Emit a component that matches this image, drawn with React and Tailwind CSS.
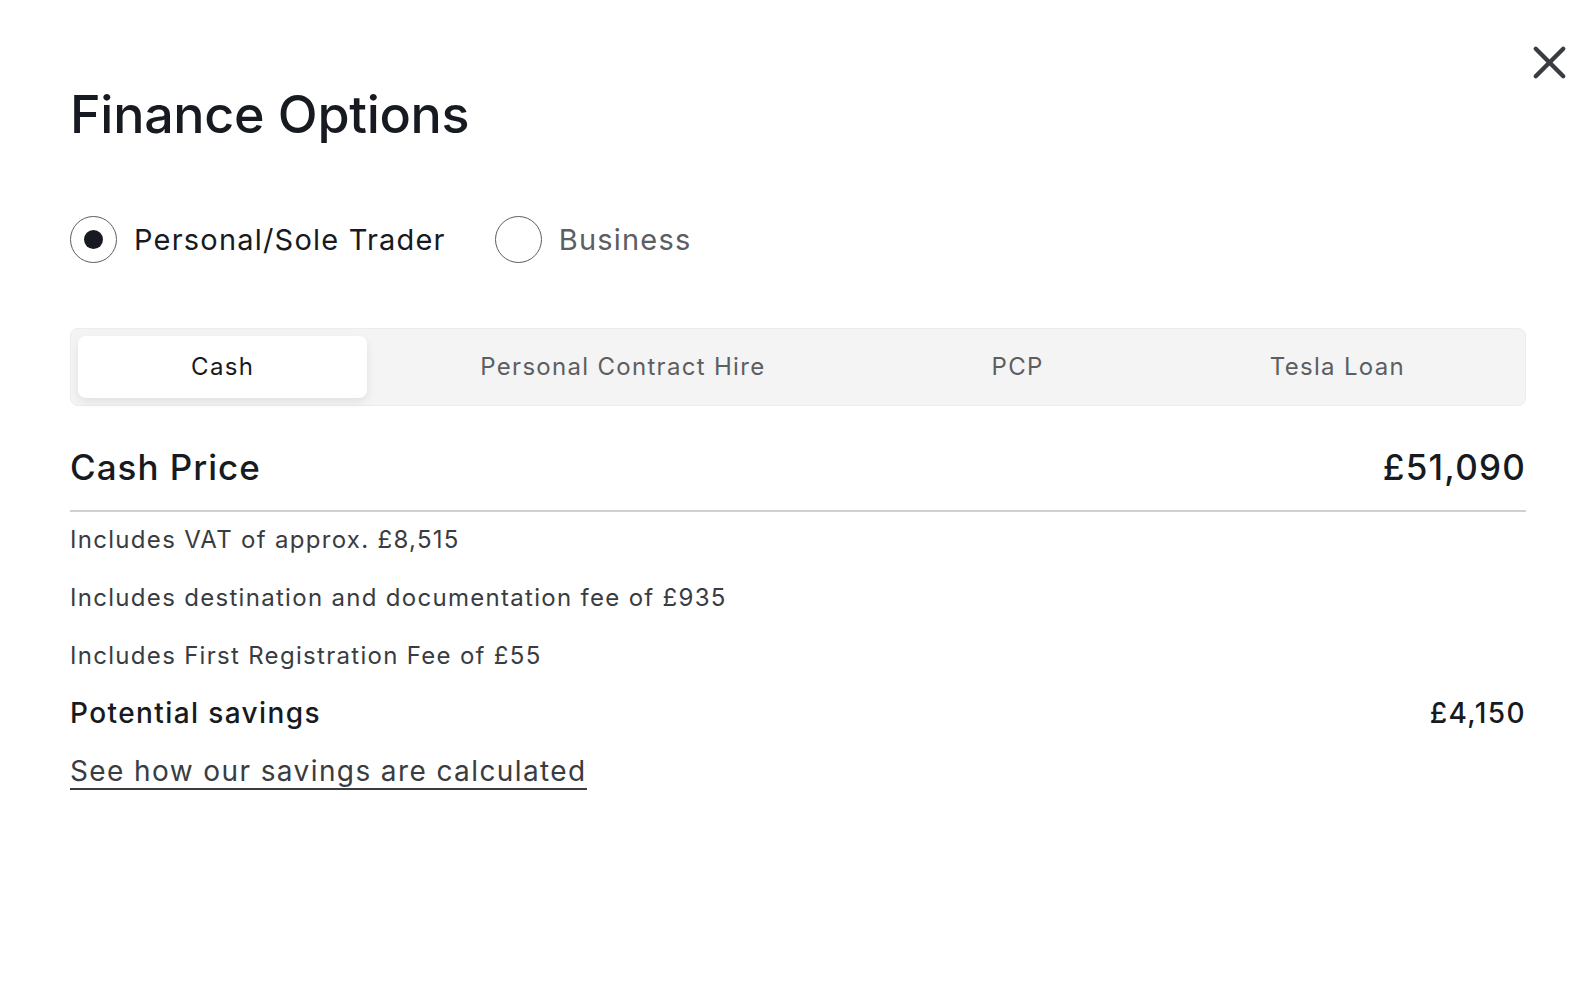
import { X } from "lucide-react";

const tabs = ["Cash", "Personal Contract Hire", "PCP", "Tesla Loan"];

function Radio({ checked, label }) {
  return (
    <label className="flex items-center gap-[17px] cursor-pointer">
      <span className="flex h-[47px] w-[47px] items-center justify-center rounded-full border-[1.5px] border-[#5c5e62]">
        {checked && <span className="h-[19px] w-[19px] rounded-full bg-[#171a20]" />}
      </span>
      <span
        className={
          "text-[29px] leading-none tracking-[1.2px] " +
          (checked ? "text-[#171a20]" : "text-[#5c5e62]")
        }
      >
        {label}
      </span>
    </label>
  );
}

export default function App() {
  const active = "Cash";

  return (
    <div className="relative min-h-screen bg-white font-['Inter',sans-serif] text-[#171a20]">
      {/* close */}
      <button className="absolute right-[17px] top-[35px] text-[#393c41]">
        <X size={55} strokeWidth={1.9} />
      </button>

      <div className="pl-[70px] pr-[68px] pt-[89px]">
        <h1 className="text-[52px] font-medium leading-none tracking-[-0.3px]">
          Finance Options
        </h1>

        <div className="mt-[75px] flex items-center gap-[49px]">
          <Radio checked label="Personal/Sole Trader" />
          <Radio label="Business" />
        </div>

        {/* tabs */}
        <div className="mt-[65px] flex h-[78px] rounded-[8px] border border-[#ececec] bg-[#f4f4f4] p-[7px]">
          {tabs.map((t) => (
            <button
              key={t}
              className={
                "flex-auto rounded-[8px] text-[24px] leading-none tracking-[1.3px] " +
                (t === active
                  ? "bg-white text-[#171a20] shadow-[0_4px_10px_rgba(0,0,0,0.08)]"
                  : "text-[#5c5e62]")
              }
            >
              {t}
            </button>
          ))}
        </div>

        {/* cash price */}
        <div className="mt-[44px] flex items-center justify-between border-b-2 border-[#d0d1d2] pb-[25px]">
          <span className="text-[35px] font-medium leading-none tracking-[1px]">Cash Price</span>
          <span className="text-[35px] font-medium leading-none tracking-[1.2px]">£51,090</span>
        </div>

        <div className="flex flex-col text-[24px] leading-none tracking-[1.3px] text-[#393c41]">
          <p className="mt-[16px]">Includes VAT of approx. £8,515</p>
          <p className="mt-[34px]">Includes destination and documentation fee of £935</p>
          <p className="mt-[34px]">Includes First Registration Fee of £55</p>
        </div>

        <div className="mt-[31px] flex items-center justify-between text-[28px] font-medium leading-none tracking-[1.4px]">
          <span>Potential savings</span>
          <span>£4,150</span>
        </div>

        <a
          href="#"
          className="mt-[30px] inline-block border-b-2 border-[#393c41] pb-[3px] text-[28px] leading-none tracking-[1.4px] text-[#393c41]"
        >
          See how our savings are calculated
        </a>
      </div>
    </div>
  );
}
